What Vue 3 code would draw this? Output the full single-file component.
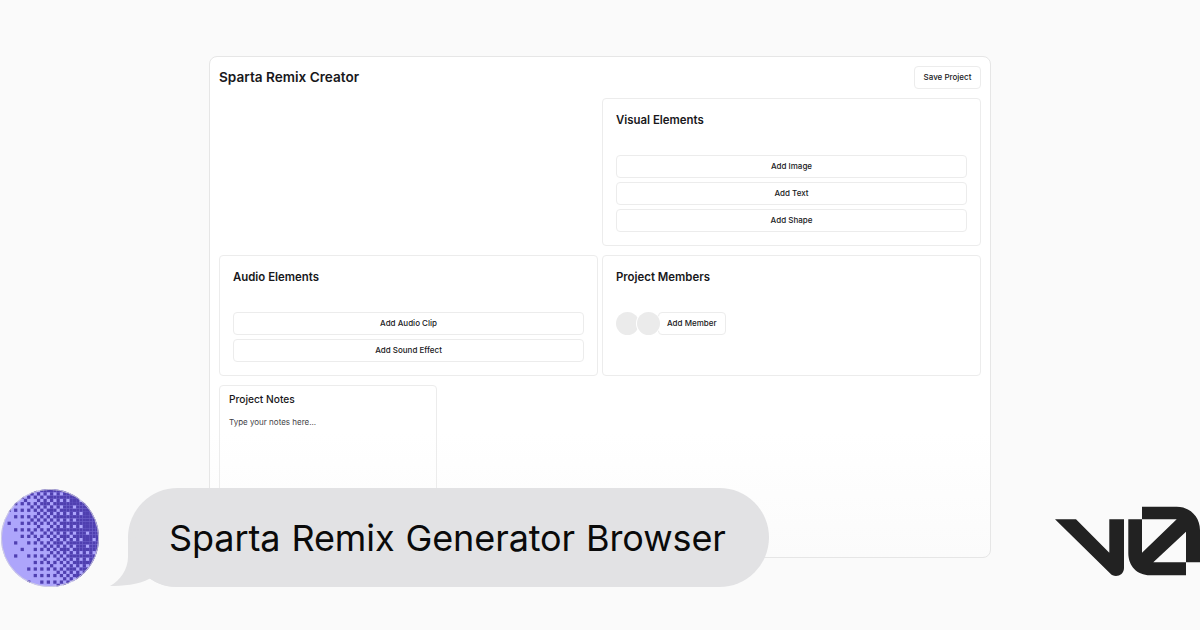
<script setup>
const visualButtons = ['Add Image', 'Add Text', 'Add Shape']
const audioButtons = ['Add Audio Clip', 'Add Sound Effect']

// ordered dither avatar: light towards bottom left, dark towards top right
const size = 98
const step = size / 30
const bayer = [
  [0, 8, 2, 10],
  [12, 4, 14, 6],
  [3, 11, 1, 9],
  [15, 7, 13, 5],
]
const noise = (r, c) => {
  const v = Math.sin(r * 12.9898 + c * 78.233) * 43758.5453
  return v - Math.floor(v)
}
const cells = []
for (let r = 0; r < 30; r++) {
  for (let c = 0; c < 30; c++) {
    const x = c * step
    const y = r * step
    const base = (x / size) * 0.72 + ((size - y) / size) * 0.3 - 0.02
    const level = 0.5 + (base - 0.5) * 1.45 + (noise(r, c) - 0.5) * 0.05
    if (level > (bayer[r % 4][c % 4] + 0.5) / 16) {
      cells.push({ x, y })
    }
  }
}
</script>

<template>
  <div class="page">
    <div class="frame">
      <header class="top">
        <h1>Sparta Remix Creator</h1>
        <button class="btn save">Save Project</button>
      </header>

      <div class="grid">
        <div></div>
        <section class="card">
          <h3>Visual Elements</h3>
          <div class="stack">
            <button v-for="b in visualButtons" :key="b" class="btn wide">{{ b }}</button>
          </div>
        </section>

        <section class="card">
          <h3>Audio Elements</h3>
          <div class="stack">
            <button v-for="b in audioButtons" :key="b" class="btn wide">{{ b }}</button>
          </div>
        </section>
        <section class="card">
          <h3>Project Members</h3>
          <div class="members">
            <span class="avatar"></span>
            <span class="avatar second"></span>
            <button class="btn add">Add Member</button>
          </div>
        </section>
      </div>

      <section class="notes">
        <h4>Project Notes</h4>
        <p>Type your notes here...</p>
      </section>
    </div>

    <svg class="dither" viewBox="0 0 98 98" width="98" height="98">
      <defs>
        <clipPath id="round"><circle cx="49" cy="49" r="49" /></clipPath>
      </defs>
      <g clip-path="url(#round)">
        <rect width="98" height="98" fill="#ada5fb" />
        <rect v-for="(k, i) in cells" :key="i" :x="k.x" :y="k.y" :width="step" :height="step" fill="#4f3fb0" />
      </g>
      <circle cx="49" cy="49" r="48.6" fill="none" stroke="#d8d8dc" stroke-width="0.8" />
    </svg>

    <div class="bubble">
      <svg class="tail" viewBox="0 0 70 60" width="70" height="60">
        <path d="M0 59C12 59 28 58 40 51.500C48 57 55 60 68 60L68 0L18 12L18 30C18 42 10 54 0 59Z" fill="#e2e2e4" />
      </svg>
      <span>Sparta Remix Generator Browser</span>
    </div>

    <svg class="logo" viewBox="1055 506 145 71" width="145" height="71">
      <path d="M1055 519.3H1076L1109.3 552.7V519.3H1124V568C1124 573 1120 576 1116 576C1113.500 576 1111.500 575 1110 573.300Z" fill="#222" />
      <path fill-rule="evenodd" d="M1128.300 519.3H1142V506.700H1176.700C1190 506.700 1200 517 1200 530V562.300H1186V531.700L1153.300 562.300H1186V575.300H1150C1137 575.300 1128.300 566 1128.300 553.300ZM1142 519.3V552.700L1176.700 519.3Z" fill="#222" />
    </svg>
  </div>
</template>

<style scoped>
.page {
  position: relative;
  width: 1200px;
  height: 630px;
  overflow: hidden;
  background: #fafafa;
  font-family: Inter, "Liberation Sans", sans-serif;
  color: #18181b;
}
.frame {
  box-sizing: border-box;
  width: 782px;
  height: 502px;
  margin: 56px 0 0 209px;
  padding: 9px;
  background: linear-gradient(#fff 75%, #fbfbfb);
  border: 1px solid #e6e6e6;
  border-radius: 8px;
}
.top {
  display: flex;
  justify-content: space-between;
  align-items: center;
  height: 23px;
  margin-bottom: 9px;
}
h1 {
  margin: 0 0 2px;
  font-size: 13.6px;
  font-weight: 600;
}
.btn {
  box-sizing: border-box;
  height: 23px;
  padding: 0 9px 1px;
  border: 1px solid #ececec;
  border-radius: 4px;
  background: #fff;
  color: #18181b;
  font-family: inherit;
  font-size: 8px;
  font-weight: 500;
}
.save {
  width: 67px;
  padding: 0 0 1px;
}
.wide {
  width: 100%;
}
.grid {
  display: grid;
  grid-template-columns: 379px 379px;
  grid-template-rows: 148px 121px;
  column-gap: 4px;
  row-gap: 9px;
}
.card {
  box-sizing: border-box;
  padding: 13px;
  border: 1px solid #ececec;
  border-radius: 4px;
}
h3 {
  margin: 0 0 27px;
  font-size: 11.4px;
  line-height: 16px;
  font-weight: 600;
}
.stack {
  display: flex;
  flex-direction: column;
  gap: 4px;
}
.members {
  display: flex;
  align-items: center;
}
.avatar {
  position: relative;
  z-index: 1;
  width: 23px;
  height: 23px;
  border-radius: 50%;
  background: #ebebeb;
}
.second {
  margin-left: -2px;
  box-shadow: 0 0 0 1px #fff;
}
.add {
  margin-left: -2px;
  padding: 0 9px 1px 8px;
}
.notes {
  box-sizing: border-box;
  width: 218px;
  height: 125px;
  margin-top: 9px;
  padding: 6px 9px;
  border: 1px solid #ececec;
  border-radius: 4px;
}
h4 {
  margin: 0 0 9px;
  font-size: 10.2px;
  line-height: 14px;
  font-weight: 500;
}
p {
  margin: 0;
  font-size: 8px;
  line-height: 14px;
  color: #3f3f46;
}
.dither {
  position: absolute;
  left: 1px;
  top: 489px;
}
.bubble {
  position: absolute;
  left: 128px;
  top: 488px;
  box-sizing: border-box;
  width: 641px;
  height: 99px;
  padding-left: 41px;
  display: flex;
  align-items: center;
  border-radius: 50px;
  background: #e2e2e4;
  color: #0a0a0a;
  font-size: 36px;
  letter-spacing: -0.1px;
  word-spacing: 1px;
}
.bubble span {
  position: relative;
}
.tail {
  position: absolute;
  left: -18px;
  bottom: 0;
}
.logo {
  position: absolute;
  left: 1055px;
  top: 506px;
}
</style>
